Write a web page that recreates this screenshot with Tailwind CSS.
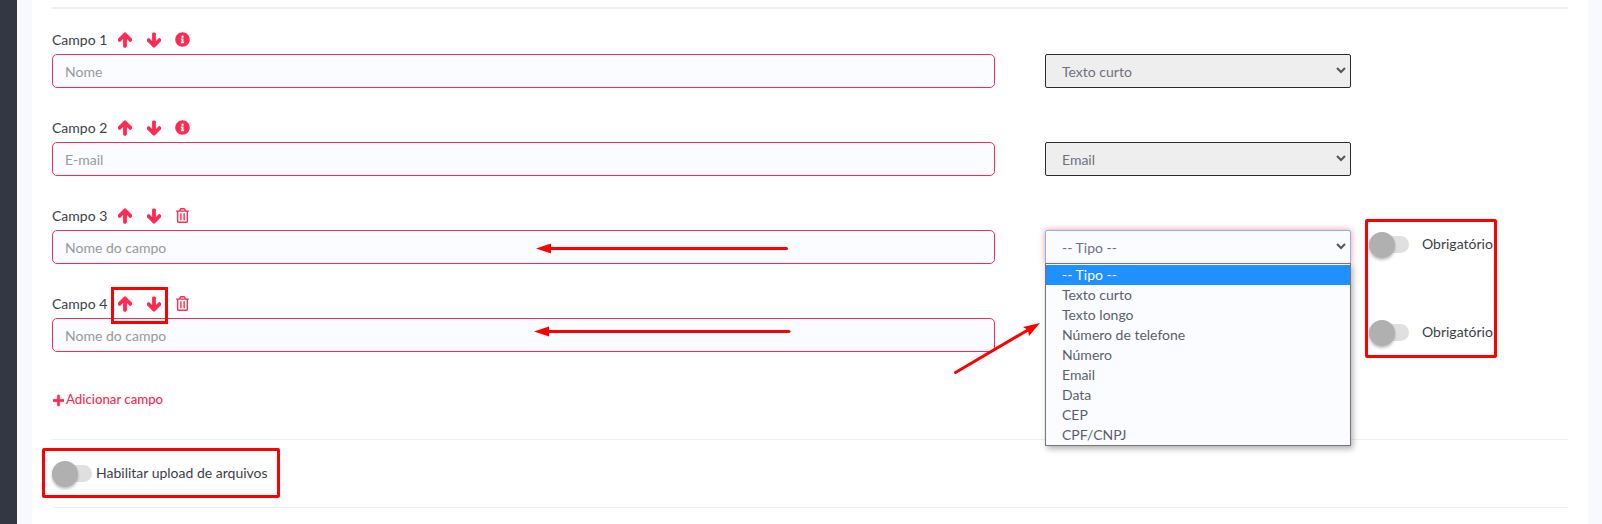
<!DOCTYPE html>
<html lang="pt-BR">
<head>
<meta charset="utf-8">
<title>Campos do formulário</title>
<script src="https://cdn.jsdelivr.net/npm/@tailwindcss/browser@4"></script>
</head>
<body class="h-[524px] overflow-hidden bg-[#f8f9fc] font-['Lato','Liberation_Sans',sans-serif] text-[14px] text-[#3a3e46]">
<div class="relative flex h-[524px]">
  <!-- sidebar edge -->
  <div class="w-[17px] shrink-0 bg-[#313843]"></div>
  <!-- card -->
  <div class="ml-[15px] w-[1556px] bg-white px-5 pt-[7px]">
    <div class="h-[2px] w-[1516px] bg-[#eeeff1]"></div>

    <!-- campo 1 -->
    <div class="mt-[21px] flex h-[58px] items-end">
      <div class="w-[943px]">
        <div class="flex h-[25px] items-start">
          <span class="w-[66px] leading-[22px]">Campo 1</span>
          <svg class="mt-[3px] h-4 w-[14px] fill-[#ff2a51] stroke-[#ff2a51] stroke-[40]" viewBox="0 0 448 512"><path d="M34.9 289.5l-22.2-22.2c-9.4-9.4-9.4-24.6 0-33.9L207 39c9.4-9.4 24.6-9.4 33.9 0l194.3 194.3c9.4 9.4 9.4 24.6 0 33.9L413 289.4c-9.5 9.5-25 9.3-34.3-.4L264 168.6V456c0 13.3-10.7 24-24 24h-32c-13.3 0-24-10.7-24-24V168.6L69.2 289.1c-9.3 9.8-24.8 10-34.3.4z"/></svg>
          <svg class="ml-[15px] mt-[3px] h-4 w-[14px] fill-[#ff2a51] stroke-[#ff2a51] stroke-[40]" viewBox="0 0 448 512"><path d="M413.1 222.5l22.2 22.2c9.4 9.4 9.4 24.6 0 33.9L241 473c-9.4 9.4-24.6 9.4-33.9 0L12.7 278.6c-9.4-9.4-9.4-24.6 0-33.9l22.2-22.2c9.5-9.5 25-9.3 34.3.4L184 343.4V56c0-13.3 10.7-24 24-24h32c13.3 0 24 10.7 24 24v287.4l114.8-120.5c9.3-9.8 24.8-10 34.3-.4z"/></svg>
          <svg class="ml-[14px] mt-[3px] h-[15px] w-[15px] fill-[#ff2a51]" viewBox="0 0 512 512"><path d="M256 8C119.043 8 8 119.083 8 256c0 136.997 111.043 248 248 248s248-111.003 248-248C504 119.083 392.957 8 256 8zm0 110c23.196 0 42 18.804 42 42s-18.804 42-42 42-42-18.804-42-42 18.804-42 42-42zm56 254c0 6.627-5.373 12-12 12h-88c-6.627 0-12-5.373-12-12v-24c0-6.627 5.373-12 12-12h12v-64h-12c-6.627 0-12-5.373-12-12v-24c0-6.627 5.373-12 12-12h64c6.627 0 12 5.373 12 12v100h12c6.627 0 12 5.373 12 12v24z"/></svg>
        </div>
        <input class="block h-[34px] w-full rounded-[5px] border border-[#f72c54] bg-[#fbfcff] px-3 text-[14px] placeholder:text-[#999] outline-none" placeholder="Nome">
      </div>
      <div class="relative ml-[50px] h-[34px] w-[306px]">
        <select class="h-full w-full appearance-none rounded-[2px] border border-[#2a2a2a] bg-[#eeeeee] pl-4 text-[14px] text-[#6e707e] outline-none"><option>Texto curto</option></select>
        <svg class="pointer-events-none absolute right-[5px] top-[13px] h-[7px] w-[10px] stroke-[#555] stroke-2" viewBox="0 0 10 7" fill="none"><path d="M1 1l4 4 4-4"/></svg>
      </div>
    </div>

    <!-- campo 2 -->
    <div class="mt-[30px] flex h-[58px] items-end">
      <div class="w-[943px]">
        <div class="flex h-[25px] items-start">
          <span class="w-[66px] leading-[22px]">Campo 2</span>
          <svg class="mt-[3px] h-4 w-[14px] fill-[#ff2a51] stroke-[#ff2a51] stroke-[40]" viewBox="0 0 448 512"><path d="M34.9 289.5l-22.2-22.2c-9.4-9.4-9.4-24.6 0-33.9L207 39c9.4-9.4 24.6-9.4 33.9 0l194.3 194.3c9.4 9.4 9.4 24.6 0 33.9L413 289.4c-9.5 9.5-25 9.3-34.3-.4L264 168.6V456c0 13.3-10.7 24-24 24h-32c-13.3 0-24-10.7-24-24V168.6L69.2 289.1c-9.3 9.8-24.8 10-34.3.4z"/></svg>
          <svg class="ml-[15px] mt-[3px] h-4 w-[14px] fill-[#ff2a51] stroke-[#ff2a51] stroke-[40]" viewBox="0 0 448 512"><path d="M413.1 222.5l22.2 22.2c9.4 9.4 9.4 24.6 0 33.9L241 473c-9.4 9.4-24.6 9.4-33.9 0L12.7 278.6c-9.4-9.4-9.4-24.6 0-33.9l22.2-22.2c9.5-9.5 25-9.3 34.3.4L184 343.4V56c0-13.3 10.7-24 24-24h32c13.3 0 24 10.7 24 24v287.4l114.8-120.5c9.3-9.8 24.8-10 34.3-.4z"/></svg>
          <svg class="ml-[14px] mt-[3px] h-[15px] w-[15px] fill-[#ff2a51]" viewBox="0 0 512 512"><path d="M256 8C119.043 8 8 119.083 8 256c0 136.997 111.043 248 248 248s248-111.003 248-248C504 119.083 392.957 8 256 8zm0 110c23.196 0 42 18.804 42 42s-18.804 42-42 42-42-18.804-42-42 18.804-42 42-42zm56 254c0 6.627-5.373 12-12 12h-88c-6.627 0-12-5.373-12-12v-24c0-6.627 5.373-12 12-12h12v-64h-12c-6.627 0-12-5.373-12-12v-24c0-6.627 5.373-12 12-12h64c6.627 0 12 5.373 12 12v100h12c6.627 0 12 5.373 12 12v24z"/></svg>
        </div>
        <input class="block h-[34px] w-full rounded-[5px] border border-[#f72c54] bg-[#fbfcff] px-3 text-[14px] placeholder:text-[#999] outline-none" placeholder="E-mail">
      </div>
      <div class="relative ml-[50px] h-[34px] w-[306px]">
        <select class="h-full w-full appearance-none rounded-[2px] border border-[#2a2a2a] bg-[#eeeeee] pl-4 text-[14px] text-[#6e707e] outline-none"><option>Email</option></select>
        <svg class="pointer-events-none absolute right-[5px] top-[13px] h-[7px] w-[10px] stroke-[#555] stroke-2" viewBox="0 0 10 7" fill="none"><path d="M1 1l4 4 4-4"/></svg>
      </div>
    </div>

    <!-- campo 3 -->
    <div class="mt-[30px] flex h-[58px] items-end">
      <div class="w-[943px]">
        <div class="flex h-[25px] items-start">
          <span class="w-[66px] leading-[22px]">Campo 3</span>
          <svg class="mt-[3px] h-4 w-[14px] fill-[#ff2a51] stroke-[#ff2a51] stroke-[40]" viewBox="0 0 448 512"><path d="M34.9 289.5l-22.2-22.2c-9.4-9.4-9.4-24.6 0-33.9L207 39c9.4-9.4 24.6-9.4 33.9 0l194.3 194.3c9.4 9.4 9.4 24.6 0 33.9L413 289.4c-9.5 9.5-25 9.3-34.3-.4L264 168.6V456c0 13.3-10.7 24-24 24h-32c-13.3 0-24-10.7-24-24V168.6L69.2 289.1c-9.3 9.8-24.8 10-34.3.4z"/></svg>
          <svg class="ml-[15px] mt-[3px] h-4 w-[14px] fill-[#ff2a51] stroke-[#ff2a51] stroke-[40]" viewBox="0 0 448 512"><path d="M413.1 222.5l22.2 22.2c9.4 9.4 9.4 24.6 0 33.9L241 473c-9.4 9.4-24.6 9.4-33.9 0L12.7 278.6c-9.4-9.4-9.4-24.6 0-33.9l22.2-22.2c9.5-9.5 25-9.3 34.3.4L184 343.4V56c0-13.3 10.7-24 24-24h32c13.3 0 24 10.7 24 24v287.4l114.8-120.5c9.3-9.8 24.8-10 34.3-.4z"/></svg>
          <svg class="ml-[15px] mt-[3px] h-[15px] w-[13px] fill-[#ff2a51]" viewBox="0 0 448 512"><path d="M268 416h24a12 12 0 0 0 12-12V188a12 12 0 0 0-12-12h-24a12 12 0 0 0-12 12v216a12 12 0 0 0 12 12zM432 80h-82.41l-34-56.7A48 48 0 0 0 274.41 0H173.59a48 48 0 0 0-41.16 23.3L98.41 80H16A16 16 0 0 0 0 96v16a16 16 0 0 0 16 16h16v336a48 48 0 0 0 48 48h288a48 48 0 0 0 48-48V128h16a16 16 0 0 0 16-16V96a16 16 0 0 0-16-16zM171.84 50.91A6 6 0 0 1 177 48h94a6 6 0 0 1 5.15 2.91L293.61 80H154.39zM368 464H80V128h288zm-212-48h24a12 12 0 0 0 12-12V188a12 12 0 0 0-12-12h-24a12 12 0 0 0-12 12v216a12 12 0 0 0 12 12z"/></svg>
        </div>
        <input class="block h-[34px] w-full rounded-[5px] border border-[#f72c54] bg-[#fbfcff] px-3 text-[14px] placeholder:text-[#999] outline-none" placeholder="Nome do campo">
      </div>
      <div class="relative ml-[50px] h-[34px] w-[306px]">
        <select class="h-full w-full appearance-none rounded-[2px] border border-[#7db9f0] bg-[#fbfcff] pl-4 text-[14px] text-[#6e707e] shadow-[0_0_6px_rgba(255,42,81,0.55)] outline-none"><option>-- Tipo --</option></select>
        <svg class="pointer-events-none absolute right-[5px] top-[13px] h-[7px] w-[10px] stroke-[#555] stroke-2" viewBox="0 0 10 7" fill="none"><path d="M1 1l4 4 4-4"/></svg>
        <!-- open dropdown -->
        <ul class="absolute left-0 top-[33px] z-10 h-[183px] w-[306px] border border-[#767676] bg-[#fbfcff] pt-[1px] text-[14px] leading-[20px] text-[#5c5f6a] shadow-[2px_3px_6px_rgba(0,0,0,0.3)]">
          <li class="h-5 bg-[#1e90ff] pl-4 text-white">-- Tipo --</li>
          <li class="h-5 pl-4">Texto curto</li>
          <li class="h-5 pl-4">Texto longo</li>
          <li class="h-5 pl-4">Número de telefone</li>
          <li class="h-5 pl-4">Número</li>
          <li class="h-5 pl-4">Email</li>
          <li class="h-5 pl-4">Data</li>
          <li class="h-5 pl-4">CEP</li>
          <li class="h-5 pl-4">CPF/CNPJ</li>
        </ul>
      </div>
      <div class="ml-[18px] flex h-[34px] items-center self-end">
        <div class="relative mb-[6px] h-[17px] w-[40px] rounded-full bg-[#e0e0e0]">
          <div class="absolute left-0 top-[-4px] h-[26px] w-[26px] rounded-full bg-[#b0b0b0] shadow-[0_2px_3px_rgba(0,0,0,0.25)]"></div>
        </div>
        <span class="mb-[6px] ml-[13px] leading-[20px]">Obrigatório</span>
      </div>
    </div>

    <!-- campo 4 -->
    <div class="mt-[30px] flex h-[58px] items-end">
      <div class="w-[943px]">
        <div class="flex h-[25px] items-start">
          <span class="w-[66px] leading-[22px]">Campo 4</span>
          <svg class="mt-[3px] h-4 w-[14px] fill-[#ff2a51] stroke-[#ff2a51] stroke-[40]" viewBox="0 0 448 512"><path d="M34.9 289.5l-22.2-22.2c-9.4-9.4-9.4-24.6 0-33.9L207 39c9.4-9.4 24.6-9.4 33.9 0l194.3 194.3c9.4 9.4 9.4 24.6 0 33.9L413 289.4c-9.5 9.5-25 9.3-34.3-.4L264 168.6V456c0 13.3-10.7 24-24 24h-32c-13.3 0-24-10.7-24-24V168.6L69.2 289.1c-9.3 9.8-24.8 10-34.3.4z"/></svg>
          <svg class="ml-[15px] mt-[3px] h-4 w-[14px] fill-[#ff2a51] stroke-[#ff2a51] stroke-[40]" viewBox="0 0 448 512"><path d="M413.1 222.5l22.2 22.2c9.4 9.4 9.4 24.6 0 33.9L241 473c-9.4 9.4-24.6 9.4-33.9 0L12.7 278.6c-9.4-9.4-9.4-24.6 0-33.9l22.2-22.2c9.5-9.5 25-9.3 34.3.4L184 343.4V56c0-13.3 10.7-24 24-24h32c13.3 0 24 10.7 24 24v287.4l114.8-120.5c9.3-9.8 24.8-10 34.3-.4z"/></svg>
          <svg class="ml-[15px] mt-[3px] h-[15px] w-[13px] fill-[#ff2a51]" viewBox="0 0 448 512"><path d="M268 416h24a12 12 0 0 0 12-12V188a12 12 0 0 0-12-12h-24a12 12 0 0 0-12 12v216a12 12 0 0 0 12 12zM432 80h-82.41l-34-56.7A48 48 0 0 0 274.41 0H173.59a48 48 0 0 0-41.16 23.3L98.41 80H16A16 16 0 0 0 0 96v16a16 16 0 0 0 16 16h16v336a48 48 0 0 0 48 48h288a48 48 0 0 0 48-48V128h16a16 16 0 0 0 16-16V96a16 16 0 0 0-16-16zM171.84 50.91A6 6 0 0 1 177 48h94a6 6 0 0 1 5.15 2.91L293.61 80H154.39zM368 464H80V128h288zm-212-48h24a12 12 0 0 0 12-12V188a12 12 0 0 0-12-12h-24a12 12 0 0 0-12 12v216a12 12 0 0 0 12 12z"/></svg>
        </div>
        <input class="block h-[34px] w-full rounded-[5px] border border-[#f72c54] bg-[#fbfcff] px-3 text-[14px] placeholder:text-[#999] outline-none" placeholder="Nome do campo">
      </div>
      <div class="ml-[50px] w-[306px]"></div>
      <div class="ml-[18px] flex h-[34px] items-center self-end">
        <div class="relative mb-[6px] h-[17px] w-[40px] rounded-full bg-[#e0e0e0]">
          <div class="absolute left-0 top-[-4px] h-[26px] w-[26px] rounded-full bg-[#b0b0b0] shadow-[0_2px_3px_rgba(0,0,0,0.25)]"></div>
        </div>
        <span class="mb-[6px] ml-[13px] leading-[20px]">Obrigatório</span>
      </div>
    </div>

    <!-- adicionar -->
    <a class="mt-[38px] flex h-5 items-center text-[13.2px] font-medium text-[#ff2a51]">
      <svg class="ml-[1px] mr-[2px] h-[13px] w-[11px] fill-[#ff2a51] stroke-[#ff2a51] stroke-[24]" viewBox="0 0 448 512"><path d="M416 208H272V64c0-17.67-14.33-32-32-32h-32c-17.67 0-32 14.33-32 32v144H32c-17.67 0-32 14.33-32 32v32c0 17.67 14.33 32 32 32h144v144c0 17.67 14.33 32 32 32h32c17.67 0 32-14.33 32-32V304h144c17.67 0 32-14.33 32-32v-32c0-17.67-14.33-32-32-32z"/></svg>
      Adicionar campo
    </a>

    <div class="mt-[29px] h-[1px] w-[1516px] bg-[#eeeff1]"></div>

    <!-- upload -->
    <div class="flex h-[67px] items-center">
      <div class="relative h-[17px] w-[40px] rounded-full bg-[#e0e0e0]">
        <div class="absolute left-0 top-[-4px] h-[26px] w-[26px] rounded-full bg-[#b0b0b0] shadow-[0_2px_3px_rgba(0,0,0,0.25)]"></div>
      </div>
      <span class="mb-[2px] ml-[4px] leading-[20px]">Habilitar upload de arquivos</span>
    </div>
    <div class="h-[1px] w-[1516px] bg-[#eeeff1]"></div>
  </div>

  <!-- annotations drawn over the screenshot -->
  <div class="absolute left-[111px] top-[287px] z-20 h-[37px] w-[57px] border-[3px] border-[#ff0000]"></div>
  <div class="absolute left-[42px] top-[448px] z-20 h-[50px] w-[238px] rounded-[2px] border-[3px] border-[#ff0000]"></div>
  <div class="absolute left-[1365px] top-[219px] z-20 h-[139px] w-[132px] rounded-[2px] border-[3px] border-[#ff0000]"></div>
  <svg class="pointer-events-none absolute left-0 top-0 z-20 h-[524px] w-[1602px]" viewBox="0 0 1602 524" fill="none">
    <path d="M786.5 248.5H548" stroke="#ff0000" stroke-width="3" stroke-linecap="round"/>
    <path d="M536 248.5l15-5v10z" fill="#ff0000"/>
    <path d="M789 331.5H546" stroke="#ff0000" stroke-width="3" stroke-linecap="round"/>
    <path d="M534 331.5l15-5v10z" fill="#ff0000"/>
    <path d="M955.5 372.5L1028 330" stroke="#ff0000" stroke-width="3" stroke-linecap="round"/>
    <path d="M1040 323l-11 13-1-6-5-3z" fill="#ff0000"/>
  </svg>
</div>
</body>
</html>
